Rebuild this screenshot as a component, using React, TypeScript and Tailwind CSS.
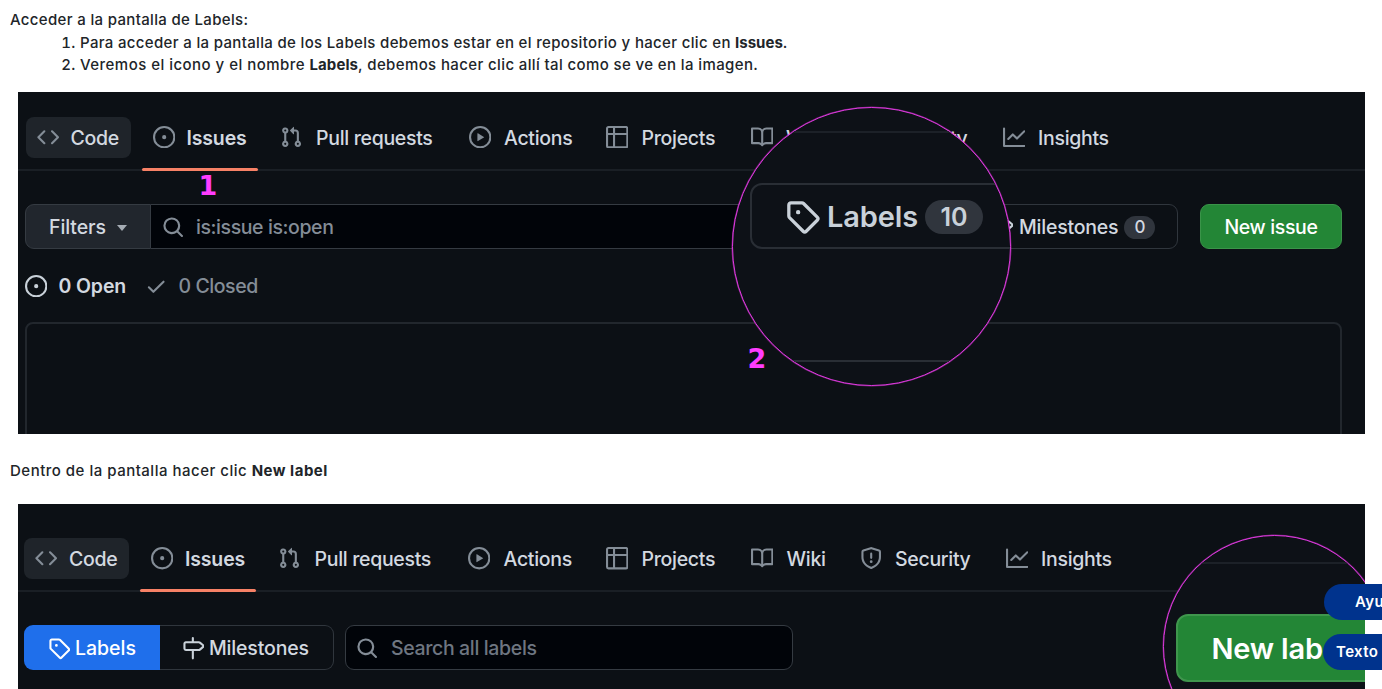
import React from "react";

const paths = {
  code: "m11.28 3.22 4.25 4.25a.75.75 0 0 1 0 1.06l-4.25 4.25a.749.749 0 0 1-1.275-.326.749.749 0 0 1 .215-.734L13.94 8l-3.72-3.72a.749.749 0 0 1 .326-1.275.749.749 0 0 1 .734.215Zm-6.56 0a.751.751 0 0 1 1.042.018.751.751 0 0 1 .018 1.042L2.06 8l3.72 3.72a.749.749 0 0 1-.326 1.275.749.749 0 0 1-.734-.215L.47 8.53a.75.75 0 0 1 0-1.06Z",
  issue: "M8 9.5a1.5 1.5 0 1 0 0-3 1.5 1.5 0 0 0 0 3ZM8 0a8 8 0 1 1 0 16A8 8 0 0 1 8 0ZM1.5 8a6.5 6.5 0 1 0 13 0 6.5 6.5 0 0 0-13 0Z",
  pull: "M1.5 3.25a2.25 2.25 0 1 1 3 2.122v5.256a2.251 2.251 0 1 1-1.5 0V5.372A2.25 2.25 0 0 1 1.5 3.25Zm5.677-.177L9.573.677A.25.25 0 0 1 10 .854V2.5h1A2.5 2.5 0 0 1 13.5 5v5.628a2.251 2.251 0 1 1-1.5 0V5a1 1 0 0 0-1-1h-1v1.646a.25.25 0 0 1-.427.177L7.177 3.427a.25.25 0 0 1 0-.354ZM3.75 2.5a.75.75 0 1 0 0 1.5.75.75 0 0 0 0-1.5Zm0 9.5a.75.75 0 1 0 0 1.5.75.75 0 0 0 0-1.5Zm8.25.75a.75.75 0 1 0 1.5 0 .75.75 0 0 0-1.5 0Z",
  play: "M8 0a8 8 0 1 1 0 16A8 8 0 0 1 8 0ZM1.5 8a6.5 6.5 0 1 0 13 0 6.5 6.5 0 0 0-13 0Zm4.879-2.773 4.264 2.559a.25.25 0 0 1 0 .428l-4.264 2.559A.25.25 0 0 1 6 10.559V5.442a.25.25 0 0 1 .379-.215Z",
  table: "M0 1.75C0 .784.784 0 1.75 0h12.5C15.216 0 16 .784 16 1.75v12.5A1.75 1.75 0 0 1 14.25 16H1.75A1.75 1.75 0 0 1 0 14.25ZM6.5 6.5v8h7.75a.25.25 0 0 0 .25-.25V6.5Zm8-1.5V1.75a.25.25 0 0 0-.25-.25H6.5V5Zm-13 1.5v7.75c0 .138.112.25.25.25H5v-8ZM5 5V1.5H1.75a.25.25 0 0 0-.25.25V5Z",
  book: "M0 1.75A.75.75 0 0 1 .75 1h4.253c1.227 0 2.317.59 3 1.501A3.743 3.743 0 0 1 11.006 1h4.245a.75.75 0 0 1 .75.75v10.5a.75.75 0 0 1-.75.75h-4.507a2.25 2.25 0 0 0-1.591.659l-.622.621a.75.75 0 0 1-1.06 0l-.622-.621A2.25 2.25 0 0 0 5.258 13H.75a.75.75 0 0 1-.75-.75Zm7.251 10.324.004-5.073-.002-2.253A2.25 2.25 0 0 0 5.003 2.5H1.5v9h3.757a3.75 3.75 0 0 1 1.994.574ZM8.755 4.75l-.004 7.322a3.752 3.752 0 0 1 1.992-.572H14.5v-9h-3.495a2.25 2.25 0 0 0-2.25 2.25Z",
  shield: "M7.467.133a1.748 1.748 0 0 1 1.066 0l5.25 1.68A1.75 1.75 0 0 1 15 3.48V7c0 1.566-.32 3.182-1.303 4.682-.983 1.498-2.585 2.813-5.032 3.855a1.697 1.697 0 0 1-1.33 0c-2.447-1.042-4.049-2.357-5.032-3.855C1.32 10.182 1 8.566 1 7V3.48a1.755 1.755 0 0 1 1.217-1.667Zm.61 1.429a.25.25 0 0 0-.153 0l-5.25 1.68a.25.25 0 0 0-.174.238V7c0 1.358.275 2.666 1.057 3.86.784 1.194 2.121 2.34 4.366 3.297a.196.196 0 0 0 .154 0c2.245-.956 3.582-2.104 4.366-3.298C13.225 9.666 13.5 8.36 13.5 7V3.48a.251.251 0 0 0-.174-.237l-5.25-1.68ZM8.75 4.75v3a.75.75 0 0 1-1.5 0v-3a.75.75 0 0 1 1.5 0ZM9 10.5a1 1 0 1 1-2 0 1 1 0 0 1 2 0Z",
  graph: "M1.5 1.75V13.5h13.75a.75.75 0 0 1 0 1.5H.75a.75.75 0 0 1-.75-.75V1.75a.75.75 0 0 1 1.5 0Zm14.28 2.53-5.25 5.25a.75.75 0 0 1-1.06 0L7 7.06 4.28 9.78a.751.751 0 0 1-1.042-.018.751.751 0 0 1-.018-1.042l3.25-3.25a.75.75 0 0 1 1.06 0L10 7.94l4.72-4.72a.751.751 0 0 1 1.042.018.751.751 0 0 1 .018 1.042Z",
  tag: "M1 7.775V2.75C1 1.784 1.784 1 2.75 1h5.025c.464 0 .91.184 1.238.513l6.25 6.25a1.75 1.75 0 0 1 0 2.474l-5.026 5.026a1.75 1.75 0 0 1-2.474 0l-6.25-6.25A1.752 1.752 0 0 1 1 7.775Zm1.5 0c0 .066.026.13.073.177l6.25 6.25a.25.25 0 0 0 .354 0l5.025-5.025a.25.25 0 0 0 0-.354l-6.25-6.25a.25.25 0 0 0-.177-.073H2.75a.25.25 0 0 0-.25.25ZM6 5a1 1 0 1 1 0 2 1 1 0 0 1 0-2Z",
  milestone: "M7.75 0a.75.75 0 0 1 .75.75V3h3.634c.414 0 .814.147 1.13.414l2.07 1.75a1.75 1.75 0 0 1 0 2.672l-2.07 1.75a1.75 1.75 0 0 1-1.13.414H8.5v5.25a.75.75 0 0 1-1.5 0V10H2.75A1.75 1.75 0 0 1 1 8.25v-3.5C1 3.784 1.784 3 2.75 3H7V.75A.75.75 0 0 1 7.75 0Zm4.384 8.5a.25.25 0 0 0 .161-.06l2.07-1.75a.248.248 0 0 0 0-.38l-2.07-1.75a.25.25 0 0 0-.161-.06H2.75a.25.25 0 0 0-.25.25v3.5c0 .138.112.25.25.25h9.384Z",
  search: "M10.68 11.74a6 6 0 0 1-7.922-8.982 6 6 0 0 1 8.982 7.922l3.04 3.04a.749.749 0 0 1-.326 1.275.749.749 0 0 1-.734-.215ZM11.5 7a4.499 4.499 0 1 0-8.997 0A4.499 4.499 0 0 0 11.5 7Z",
  check: "M13.78 4.22a.75.75 0 0 1 0 1.06l-7.25 7.25a.75.75 0 0 1-1.06 0L2.22 9.28a.751.751 0 0 1 .018-1.042.751.751 0 0 1 1.042-.018L6 10.94l6.72-6.72a.75.75 0 0 1 1.06 0Z",
};

type IconName = keyof typeof paths;

function Icon({ name, className = "size-[22.4px] text-[#848d97]" }: { name: IconName; className?: string }) {
  return (
    <svg viewBox="0 0 16 16" fill="currentColor" className={`shrink-0 ${className}`} aria-hidden="true">
      <path d={paths[name]} />
    </svg>
  );
}

type NavItem = { icon: IconName; label: string; cell: string };

function RepoNav({ items, className }: { items: NavItem[]; className: string }) {
  return (
    <nav className={`flex border-b-2 border-[#1a1f25] tracking-[-0.32px] whitespace-nowrap ${className}`}>
      <div className="mr-[11px] flex h-[41px] w-[105px] shrink-0 items-center rounded-[8px] bg-[#1f242a] pl-[11px]">
        <Icon name="code" />
        <span className="ml-[11.6px] pt-[2px]">Code</span>
      </div>
      <div className="flex h-[54px] w-[116px] shrink-0 flex-col justify-between">
        <div className="flex h-[41px] items-center pl-[11px]">
          <Icon name="issue" />
          <span className="ml-[11.6px] pt-[2px] font-semibold tracking-[-0.15px]">Issues</span>
        </div>
        <div className="h-[3px] rounded-full bg-[#f78166]" />
      </div>
      <div className="flex pl-[22px]">
        {items.map((item) => (
          <div key={item.label} className={`flex h-[41px] shrink-0 items-center ${item.cell}`}>
            <Icon name={item.icon} />
            <span className={item.icon === "pull" ? "ml-[14.2px] pt-[2px]" : "ml-[13.2px] pt-[2px]"}>{item.label}</span>
          </div>
        ))}
      </div>
    </nav>
  );
}

const issuesNav: NavItem[] = [
  { icon: "pull", label: "Pull requests", cell: "w-[189px]" },
  { icon: "play", label: "Actions", cell: "w-[137.5px]" },
  { icon: "table", label: "Projects", cell: "w-[144.5px]" },
  { icon: "book", label: "Wiki", cell: "w-[106px]" },
  { icon: "shield", label: "Security", cell: "w-[146px]" },
  { icon: "graph", label: "Insights", cell: "w-[120px]" },
];

const labelsNav: NavItem[] = [
  { icon: "pull", label: "Pull requests", cell: "w-[190px]" },
  { icon: "play", label: "Actions", cell: "w-[138px]" },
  { icon: "table", label: "Projects", cell: "w-[145px]" },
  { icon: "book", label: "Wiki", cell: "w-[108.5px]" },
  { icon: "shield", label: "Security", cell: "w-[146px]" },
  { icon: "graph", label: "Insights", cell: "w-[120px]" },
];

function IssuesPanel() {
  return (
    <section className="relative mx-[18px] mt-[15px] h-[342px] w-[1347px] overflow-hidden bg-[#0c1015] pt-[25px] font-['Inter',sans-serif] text-[19.5px] text-[#d3d9e0]">
      <RepoNav items={issuesNav} className="h-[54px] pl-[7.5px]" />
      <div className="mt-[33px] flex h-[45px] pl-[7px] whitespace-nowrap">
        <div className="flex w-[126px] items-center rounded-l-[9px] border border-[#353b42] bg-[#21262d] pt-[2px] pl-[23px] font-medium tracking-[-0.1px]">
          <span>Filters</span>
          <span className="mt-[2px] ml-[11.5px] border-x-[5.5px] border-t-[6px] border-x-transparent border-t-[#a5acb4]" />
        </div>
        <div className="flex w-[700px] items-center border-y border-[#353b42] bg-[#010409] pt-[2px] pl-[10.5px] tracking-[-0.4px] text-[#848d97]">
          <Icon name="search" />
          <span className="ml-[12px]">is:issue is:open</span>
        </div>
        <div className="flex w-[327px] items-center rounded-r-[9px] border border-[#30363d] pt-[2px] pl-[139px] font-medium tracking-[-0.2px]">
          <Icon name="milestone" className="size-[22.4px] text-[#c9d1d9]" />
          <span className="ml-[5.5px]">Milestones</span>
          <span className="ml-[6px] flex h-[23px] w-[31px] items-center justify-center rounded-full bg-[#30353d] text-[17px]">0</span>
        </div>
        <div className="ml-[22px] flex w-[142px] items-center justify-center rounded-[9px] border border-[#3a9449] bg-[#238636] pt-[2px] font-medium tracking-[-0.35px] text-white">
          New issue
        </div>
      </div>
      <div className="mt-[26px] flex h-[23px] items-center pl-[7px] whitespace-nowrap">
        <Icon name="issue" className="size-[22.4px] text-[#c9d1d9]" />
        <span className="ml-[11px] font-semibold tracking-[-0.1px]">0 Open</span>
        <Icon name="check" className="ml-[19px] size-[22.4px] text-[#848d97]" />
        <span className="ml-[11px] tracking-[-0.45px] text-[#848d97]">0 Closed</span>
      </div>
      <div className="mt-[24px] ml-[7px] h-[140px] w-[1317px] rounded-t-[8px] border-2 border-[#22272d]" />

      <span className="absolute top-[77px] left-[180.5px] font-['DejaVu_Sans',sans-serif] text-[27px] leading-[34px] font-bold text-[#ff3dff]">1</span>
      <span className="absolute top-[250px] left-[729.5px] font-['DejaVu_Sans',sans-serif] text-[27px] leading-[34px] font-bold text-[#ff3dff]">2</span>

      <div className="absolute top-[15px] left-[714px] size-[279px] overflow-hidden rounded-full border border-[#e03ae0] bg-[#0d1117] shadow-[0_0_0_0.5px_#e03ae080]">
        <div className="mt-[23px] h-[2px] bg-[#1c2128]" />
        <div className="mt-[50px] ml-[17px] flex h-[66px] w-[400px] items-center rounded-[12px] border-2 border-[#292e35] pl-[33px] text-[29px] font-semibold text-[#c9d1d9]">
          <Icon name="tag" className="mt-[1px] size-[35px] text-[#c9d1d9]" />
          <span className="ml-[7px] pt-[3px] tracking-[-0.15px]">Labels</span>
          <span className="mt-[3px] ml-[7px] flex h-[34px] w-[58px] items-center justify-center rounded-full bg-[#30353d] pt-[1px] text-[25px]">10</span>
        </div>
        <div className="mt-[111px] h-[2px] bg-[#292e35]" />
      </div>
    </section>
  );
}

function LabelsPanel() {
  return (
    <section className="relative mx-[18px] mt-[22px] h-[190px] w-[1347px] overflow-hidden bg-[#0c1015] pt-[34px] font-['Inter',sans-serif] text-[19.5px] text-[#d3d9e0]">
      <RepoNav items={labelsNav} className="h-[54px] pl-[6px]" />
      <div className="mt-[33px] flex h-[45px] pl-[6px] whitespace-nowrap">
        <div className="flex w-[135.5px] items-center rounded-l-[9px] bg-[#1f6feb] pt-[2px] pl-[23.5px] font-medium text-white">
          <Icon name="tag" className="size-[22.4px] text-white" />
          <span className="ml-[5px]">Labels</span>
        </div>
        <div className="flex w-[174px] items-center rounded-r-[9px] border border-l-0 border-[#30363d] pt-[2px] pl-[22px] font-medium tracking-[-0.15px]">
          <Icon name="milestone" className="size-[22.4px] text-[#c9d1d9]" />
          <span className="ml-[5px]">Milestones</span>
        </div>
        <div className="ml-[11.5px] flex w-[448px] items-center rounded-[9px] border border-[#353b42] bg-[#010409] pt-[2px] pl-[10px] tracking-[-0.35px] text-[#6e7681]">
          <Icon name="search" />
          <span className="ml-[12.5px]">Search all labels</span>
        </div>
      </div>

      <div className="absolute top-[30.5px] left-[1144.5px] size-[223px] overflow-hidden rounded-full border border-[#e03ae0] bg-[#0d1117] shadow-[0_0_0_0.5px_#e03ae080]">
        <div className="mt-[26.5px] h-[2px] bg-[#1c2128]" />
        <div className="mt-[50px] ml-[12px] flex h-[68px] w-[400px] items-center rounded-[12px] border-2 border-[#3f964d] bg-[#238636] pt-[2px] pl-[34px] text-[29px] font-semibold tracking-[-0.2px] whitespace-nowrap text-white">
          New lab
        </div>
      </div>
    </section>
  );
}

export default function App() {
  return (
    <main className="relative h-[689px] w-full overflow-hidden bg-white font-['Inter',sans-serif] text-[15px] leading-[22.5px] font-medium tracking-[0.335px] text-[#212529]">
      <div className="pt-[9px] pl-[10px]">
        <p>Acceder a la pantalla de Labels:</p>
        <ol className="list-decimal pl-[70px]">
          <li>
            Para acceder a la pantalla de los Labels debemos estar en el repositorio y hacer clic en{" "}
            <b className="tracking-normal">Issues</b>.
          </li>
          <li>
            <span className="tracking-[0.47px]">Veremos el icono y el nombre </span>
            <b className="tracking-[0.1px]">Labels</b>
            <span className="tracking-[0.38px]">, debemos hacer clic allí tal como se ve en la imagen.</span>
          </li>
        </ol>
      </div>
      <div className="tracking-normal">
        <IssuesPanel />
      </div>
      <p className="mt-[26px] pl-[10px] tracking-[0.5px]">
        Dentro de la pantalla hacer clic <b>New label</b>
      </p>
      <div className="tracking-normal">
        <LabelsPanel />
      </div>
      <button className="absolute top-[584px] left-[1324px] h-[36px] w-[120px] rounded-full bg-[#00338d] pl-[31px] text-left font-semibold text-white">
        Ayu
      </button>
      <button className="absolute top-[634px] left-[1323px] h-[36px] w-[140px] rounded-full bg-[#00338d] pl-[13px] text-left font-semibold tracking-[0.4px] text-white">
        Texto
      </button>
    </main>
  );
}
